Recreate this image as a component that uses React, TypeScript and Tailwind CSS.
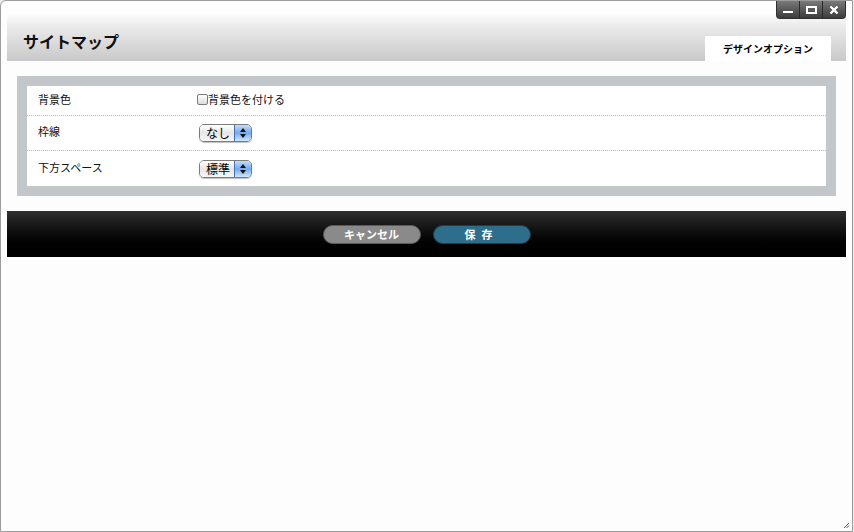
import React from 'react';

const font = { fontFamily: '"Noto Sans CJK JP", "Liberation Sans", sans-serif' };

const WindowButtons = () => (
  <div className="absolute right-[6px] top-0 flex h-[18px] overflow-hidden rounded-b-[4px] border border-t-0 border-[#2f2f2f] bg-gradient-to-b from-[#7a7a7a] to-[#3c3c3c]">
    <div className="flex w-[23px] items-center justify-center border-r border-[#2a2a2a]">
      <div className="mt-[5px] h-[2px] w-[10px] bg-white" />
    </div>
    <div className="flex w-[23px] items-center justify-center border-r border-[#2a2a2a]">
      <div className="h-[8px] w-[11px] border-2 border-white" />
    </div>
    <div className="flex w-[22px] items-center justify-center">
      <svg width="10" height="10" viewBox="0 0 10 10">
        <path d="M1.5 1.5 L8.5 8.5 M8.5 1.5 L1.5 8.5" stroke="white" strokeWidth="2.4" />
      </svg>
    </div>
  </div>
);

const Select = ({ label }: { label: string }) => (
  <div className="ml-[2px] flex h-[18px] w-[53px] overflow-hidden rounded-[5px] border border-[#7b7b7b] shadow-[0_1px_1px_rgba(0,0,0,0.25)]">
    <div className="flex flex-1 items-center bg-gradient-to-b from-[#ffffff] via-[#e6e6e6] to-[#f7f7f7] pl-[6px] text-[12px] leading-none text-black">
      {label}
    </div>
    <div className="flex w-[17px] flex-col items-center justify-center gap-[2px] border-l border-[#4b6fa6] bg-gradient-to-b from-[#c4ddf8] via-[#74a9ec] to-[#cde8ff]">
      <svg width="6" height="4" viewBox="0 0 6 4"><path d="M3 0 L6 4 L0 4 Z" fill="#111" /></svg>
      <svg width="6" height="4" viewBox="0 0 6 4"><path d="M0 0 L6 0 L3 4 Z" fill="#111" /></svg>
    </div>
  </div>
);

const Row = ({ label, children, h, last }: { label: string; children: React.ReactNode; h: string; last?: boolean }) => (
  <div className={`flex items-center ${h} ${last ? '' : 'border-b border-dotted border-[#b8b8b8]'}`}>
    <div className="mb-[3px] w-[170px] pl-[11px] text-[11px] text-[#111]">{label}</div>
    <div className="flex items-center">{children}</div>
  </div>
);

export default function App() {
  return (
    <div style={font} className="h-[532px] w-[854px] overflow-hidden bg-[#e9e9e9]">
      <div className="relative h-[532px] w-[853px] rounded-tl-[6px] border border-[#9c9c9c] bg-[#fdfdfd]">
        <WindowButtons />

        <div className="px-[6px] pt-[11px]">
          <div className="h-[13px] rounded-tl-[8px] bg-gradient-to-b from-[#ffffff] to-[#ececec]" />
          <div className="flex h-[36px] items-end justify-between bg-gradient-to-b from-[#ececec] to-[#c9c9c9]">
            <div className="mb-[8px] pl-[16px] text-[16px] font-bold text-[#111]">サイトマップ</div>
            <div className="mr-[15px] flex h-[25px] w-[126px] items-center justify-center bg-white text-[10px] font-bold text-black">
              デザインオプション
            </div>
          </div>

          <div className="mx-[10px] mt-[15px] bg-[#c3c7ca] p-[10px]">
            <div className="bg-white">
              <Row label="背景色" h="h-[30px]">
                <label className="mb-[3px] flex items-center text-[11px] text-[#111]">
                  <span className="h-[11px] w-[11px] rounded-[2px] border border-[#7a7a7a] bg-gradient-to-b from-white to-[#dcdcdc]" />
                  背景色を付ける
                </label>
              </Row>
              <Row label="枠線" h="h-[35px]">
                <Select label="なし" />
              </Row>
              <Row label="下方スペース" h="h-[35px]" last>
                <Select label="標準" />
              </Row>
            </div>
          </div>

          <div className="mt-[15px] flex h-[46px] items-center justify-center gap-[12px] bg-gradient-to-b from-[#2f2f2f] to-[#000000]">
            <div className="flex h-[19px] w-[98px] items-center justify-center rounded-full border border-[#5a5a5a] bg-[#8a8a8a] text-[11px] font-bold text-white">
              キャンセル
            </div>
            <div className="flex h-[19px] w-[98px] items-center justify-center rounded-full border border-[#1c3d4d] bg-[#2f6e8a] text-[11px] font-bold tracking-[6px] text-white">
              保存
            </div>
          </div>
        </div>

        <svg className="absolute bottom-[2px] right-[2px]" width="7" height="7" viewBox="0 0 7 7">
          <path d="M6 1 L1 6 M6 3.5 L3.5 6" stroke="#555" strokeWidth="1" />
        </svg>
      </div>
    </div>
  );
}
